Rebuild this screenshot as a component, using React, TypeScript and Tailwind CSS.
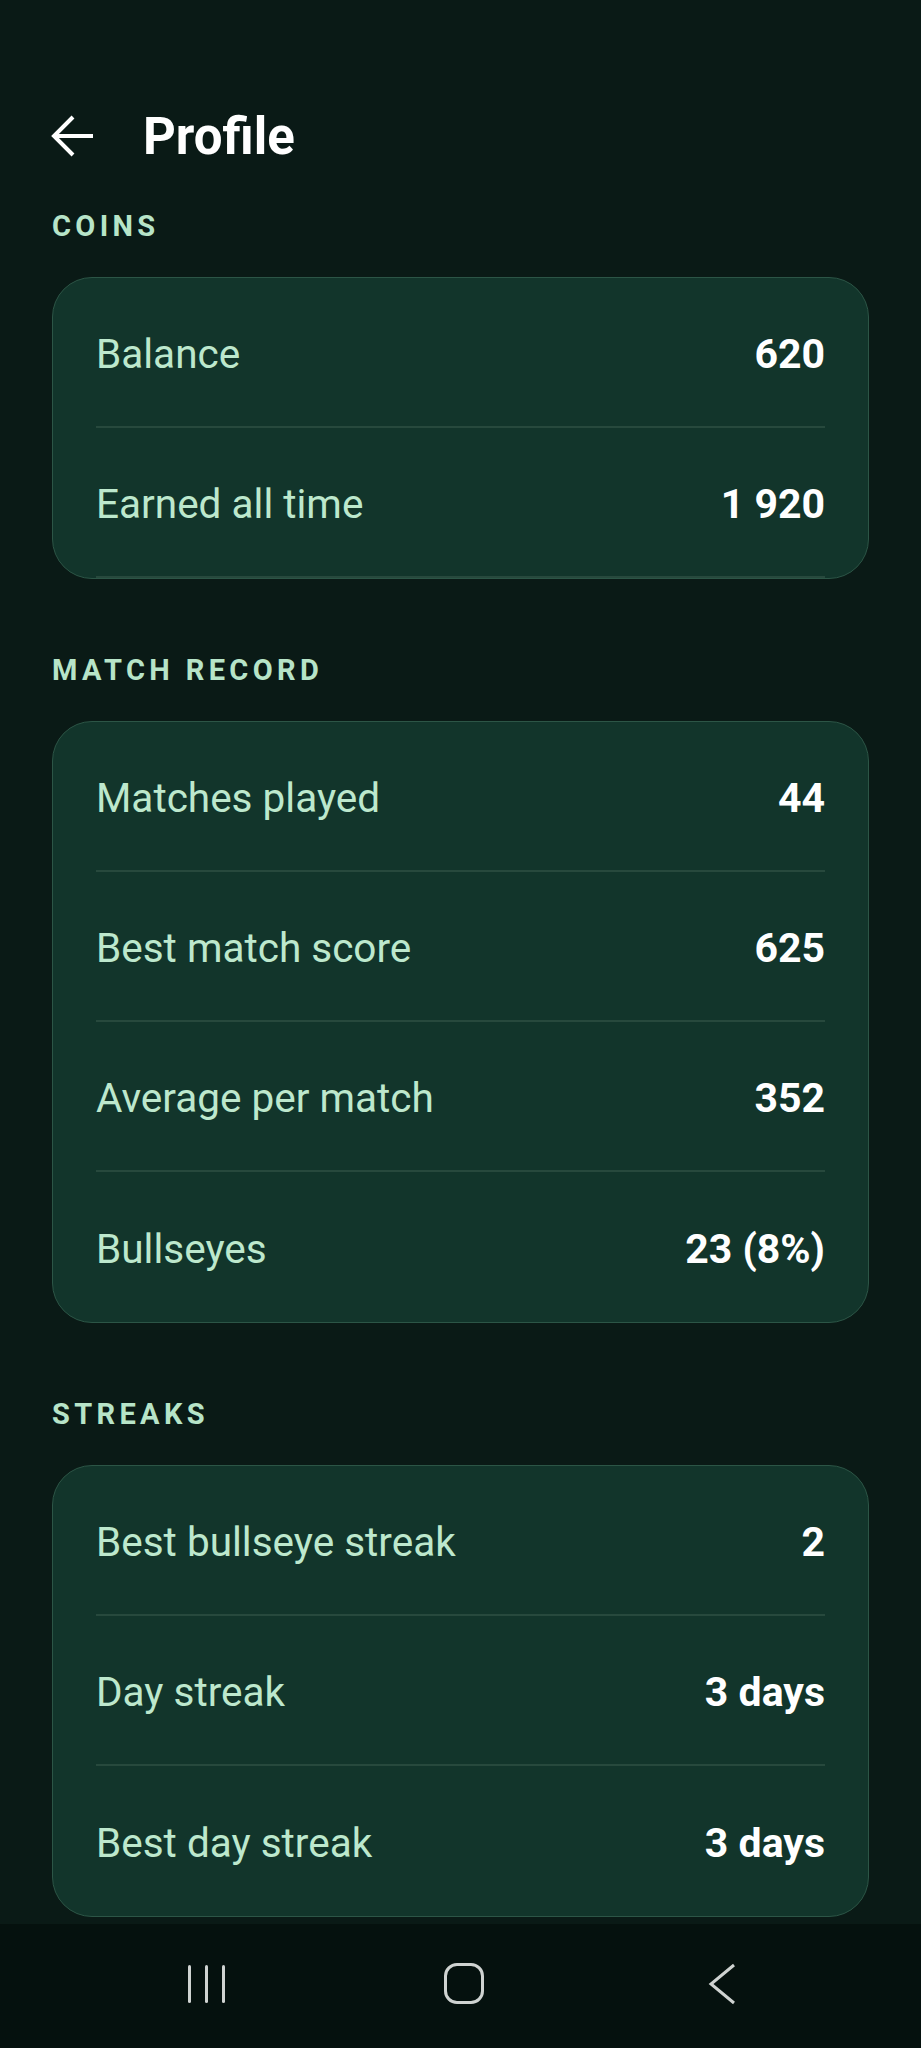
const sections = [
  {
    title: 'COINS',
    trailingDivider: true,
    rows: [
      { label: 'Balance', value: '620' },
      { label: 'Earned all time', value: '1 920' },
    ],
  },
  {
    title: 'MATCH RECORD',
    trailingDivider: false,
    rows: [
      { label: 'Matches played', value: '44' },
      { label: 'Best match score', value: '625' },
      { label: 'Average per match', value: '352' },
      { label: 'Bullseyes', value: '23 (8%)' },
    ],
  },
  {
    title: 'STREAKS',
    trailingDivider: false,
    rows: [
      { label: 'Best bullseye streak', value: '2' },
      { label: 'Day streak', value: '3 days' },
      { label: 'Best day streak', value: '3 days' },
    ],
  },
]

function BackArrow() {
  return (
    <svg width="46" height="42" viewBox="0 0 46 42" fill="none" stroke="white" strokeWidth="4">
      <path d="M43 21H4" />
      <path d="M23 2L4 21L23 40" strokeLinejoin="miter" />
    </svg>
  )
}

function NavBar() {
  return (
    <div className="h-[124px] bg-[#05110e] flex items-center relative shrink-0">
      <div className="absolute left-[188px] top-[41px] flex gap-[14px]">
        <div className="w-[3px] h-[38px] bg-[#cfd3d1] rounded-full" />
        <div className="w-[3px] h-[38px] bg-[#cfd3d1] rounded-full" />
        <div className="w-[3px] h-[38px] bg-[#cfd3d1] rounded-full" />
      </div>
      <div className="absolute left-[444px] top-[39px] w-[40px] h-[41px] border-[3px] border-[#cfd3d1] rounded-[13px]" />
      <svg className="absolute left-[708px] top-[39px]" width="28" height="42" viewBox="0 0 28 42" fill="none" stroke="#cfd3d1" strokeWidth="3">
        <path d="M26 2L3 21L26 40" />
      </svg>
    </div>
  )
}

export default function App() {
  return (
    <div
      className="w-[921px] h-[2048px] bg-[#0a1a16] flex flex-col overflow-hidden"
      style={{ fontFamily: 'Roboto, "Noto Sans", sans-serif' }}
    >
      <div className="flex-1 overflow-hidden">
        <div className="flex items-center h-[96px] mt-[88px] pl-[50px]">
          <BackArrow />
          <h1 className="ml-[47px] text-[51px] font-bold text-white leading-none">Profile</h1>
        </div>

        {sections.map((section, i) => (
          <div key={section.title} className={i === 0 ? 'mt-[24px]' : 'mt-[73px]'}>
            <p className="ml-[52px] text-[29px] leading-[36px] font-bold tracking-[0.15em] text-[#b7e4c8]">
              {section.title}
            </p>
            <div className="mt-[33px] mx-[52px] rounded-[40px] border border-[#2c5546] bg-[#12352b] overflow-hidden">
              {section.rows.map((row, j) => {
                const last = j === section.rows.length - 1
                const divider = !last || section.trailingDivider
                return (
                  <div
                    key={row.label}
                    className={`mx-[43px] h-[150px] pt-[5px] flex items-center justify-between ${
                      divider ? 'border-b-2 border-[#27493d]' : ''
                    }`}
                  >
                    <span className="text-[40.5px] text-[#bde8cd]">{row.label}</span>
                    <span className="text-[41px] font-bold text-white">{row.value}</span>
                  </div>
                )
              })}
            </div>
          </div>
        ))}
      </div>
      <NavBar />
    </div>
  )
}
